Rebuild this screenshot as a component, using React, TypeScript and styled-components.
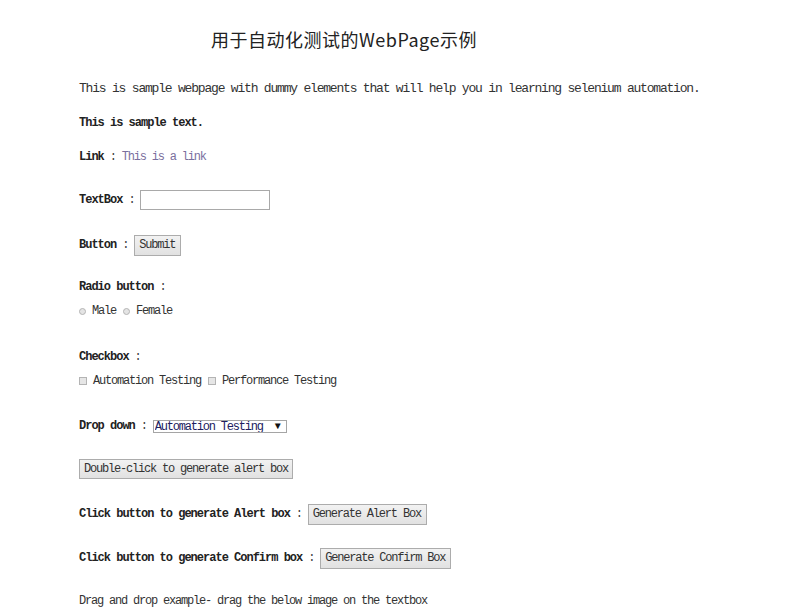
import React from "react";
import styled, { createGlobalStyle } from "styled-components";

const GlobalStyle = createGlobalStyle`
  html, body {
    margin: 0;
    padding: 0;
    background: #fff;
  }
  body {
    font-family: "Liberation Mono", "Noto Sans CJK SC", monospace;
    color: #333;
  }
`;

const Page = styled.div`
  padding: 21px 0 0 79px;
  display: flex;
  flex-direction: column;
`;

const Title = styled.h1`
  margin: 0;
  width: 530px;
  height: 36px;
  display: flex;
  align-items: center;
  justify-content: center;
  font-family: "Noto Sans CJK SC", "Liberation Mono", monospace;
  font-weight: 400;
  font-size: 18px;
  letter-spacing: 0.5px;
  color: #222;
`;

const Row = styled.div<{ $gap: number }>`
  margin-top: ${(p) => p.$gap}px;
  height: 22px;
  display: flex;
  align-items: center;
  font-size: 12px;
  letter-spacing: -1.2px;
  white-space: nowrap;
`;

const Intro = styled.span`
  font-size: 13px;
  letter-spacing: -1.2px;
  color: #333;
`;

const Bold = styled.b`
  font-weight: 700;
  color: #222;
  letter-spacing: -1px;
`;

const Colon = styled.span`
  margin: 0 6px 0 6px;
  color: #444;
`;

const Link = styled.a`
  color: #7a6f9e;
  text-decoration: none;
`;

const TextInput = styled.input`
  width: 130px;
  height: 20px;
  box-sizing: border-box;
  border: 1px solid #a9a9a9;
  padding: 0 2px;
  margin: 0;
  font: inherit;
`;

const Btn = styled.button<{ $w: number; $h?: number }>`
  width: ${(p) => p.$w}px;
  height: ${(p) => p.$h ?? 21}px;
  box-sizing: border-box;
  margin: 0;
  padding: 0 4px;
  border: 1px solid #acacac;
  border-radius: 0;
  background: linear-gradient(#f2f2f2, #e1e1e1);
  font-family: "Liberation Mono", monospace;
  font-size: 12px;
  letter-spacing: -1.2px;
  color: #333;
  text-align: left;
  white-space: nowrap;
`;

const Option = styled.label`
  display: flex;
  align-items: center;
  color: #333;
`;

const Radio = styled.input`
  appearance: none;
  width: 7px;
  height: 7px;
  margin: 0 6px 0 0;
  border-radius: 50%;
  border: 1px solid #b4b4b4;
  background: #e4e4e4;
  box-sizing: border-box;
`;

const Check = styled.input`
  appearance: none;
  width: 8px;
  height: 8px;
  margin: 0 6px 0 0;
  border: 1px solid #b4b4b4;
  background: #e6e6e6;
  box-sizing: border-box;
`;

const OptionGap = styled.span`
  width: 7px;
`;

const SelectBox = styled.div`
  width: 134px;
  height: 13px;
  box-sizing: border-box;
  border: 1px solid #a5a5a5;
  display: flex;
  align-items: flex-start;
  overflow: hidden;
`;

const Select = styled.select`
  appearance: none;
  flex: 1;
  min-width: 0;
  height: 14px;
  border: none;
  outline: none;
  padding: 0 0 0 1px;
  margin: -1px 0 0 0;
  background: transparent;
  font-family: "Liberation Mono", monospace;
  font-size: 12px;
  letter-spacing: -1.2px;
  color: #202060;
  line-height: 14px;
`;

const Arrow = styled.span`
  width: 16px;
  font-size: 10px;
  line-height: 11px;
  color: #111;
  letter-spacing: 0;
  text-align: center;
`;

const Plain = styled.span`
  color: #333;
`;

export default function App() {
  return (
    <>
      <GlobalStyle />
      <Page>
        <Title>用于自动化测试的WebPage示例</Title>
        <Row $gap={20}>
          <Intro>
            This is sample webpage with dummy elements that will help you in
            learning selenium automation.
          </Intro>
        </Row>
        <Row $gap={13}>
          <Bold>This is sample text.</Bold>
        </Row>
        <Row $gap={12}>
          <Bold>Link</Bold>
          <Colon>:</Colon>
          <Link href="#">This is a link</Link>
        </Row>
        <Row $gap={21}>
          <Bold>TextBox</Bold>
          <Colon>:</Colon>
          <TextInput type="text" />
        </Row>
        <Row $gap={23}>
          <Bold>Button</Bold>
          <Colon>:</Colon>
          <Btn $w={47}>Submit</Btn>
        </Row>
        <Row $gap={20}>
          <Bold>Radio button</Bold>
          <Colon>:</Colon>
        </Row>
        <Row $gap={2}>
          <Option>
            <Radio type="radio" name="gender" />
            Male
          </Option>
          <OptionGap />
          <Option>
            <Radio type="radio" name="gender" />
            Female
          </Option>
        </Row>
        <Row $gap={24}>
          <Bold>Checkbox</Bold>
          <Colon>:</Colon>
        </Row>
        <Row $gap={2}>
          <Option>
            <Check type="checkbox" />
            Automation Testing
          </Option>
          <OptionGap />
          <Option>
            <Check type="checkbox" />
            Performance Testing
          </Option>
        </Row>
        <Row $gap={23}>
          <Bold>Drop down</Bold>
          <Colon>:</Colon>
          <SelectBox>
            <Select defaultValue="auto">
              <option value="auto">Automation Testing</option>
              <option value="perf">Performance Testing</option>
            </Select>
            <Arrow>▼</Arrow>
          </SelectBox>
        </Row>
        <Row $gap={21}>
          <Btn $w={214} $h={20}>
            Double-click to generate alert box
          </Btn>
        </Row>
        <Row $gap={23}>
          <Bold>Click button to generate Alert box</Bold>
          <Colon>:</Colon>
          <Btn $w={119}>Generate Alert Box</Btn>
        </Row>
        <Row $gap={22}>
          <Bold>Click button to generate Confirm box</Bold>
          <Colon>:</Colon>
          <Btn $w={131}>Generate Confirm Box</Btn>
        </Row>
        <Row $gap={21}>
          <Plain>Drag and drop example- drag the below image on the textbox</Plain>
        </Row>
      </Page>
    </>
  );
}
